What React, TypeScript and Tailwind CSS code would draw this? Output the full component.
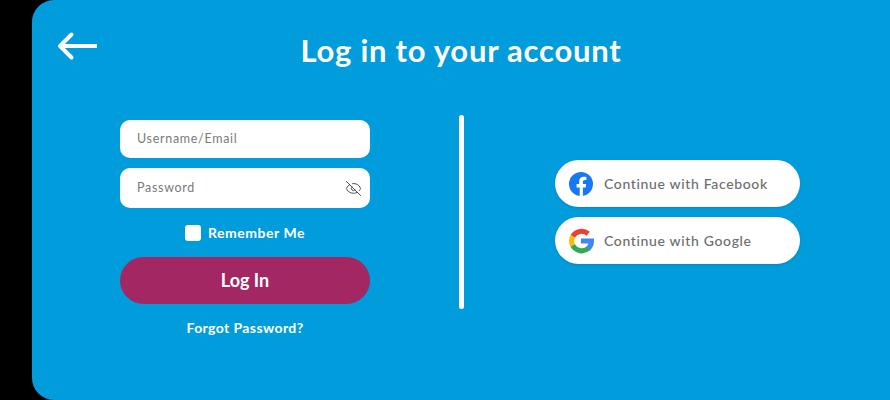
import { EyeOff } from "lucide-react";

const FacebookIcon = () => (
  <svg width="24" height="24" viewBox="0 0 24 24" className="shrink-0">
    <circle cx="12" cy="12" r="12" fill="#1877f2" />
    <path
      d="M16.7 15.500l.5-3.500h-3.300V9.800c0-1 .5-1.900 2-1.900h1.500V5c0 0-1.400-.2-2.700-.2-2.700 0-4.500 1.600-4.500 4.600V12H7.600v3.500h3.100V24h3.200v-8.500h2.800z"
      fill="#fff"
    />
  </svg>
);

const GoogleIcon = () => (
  <svg width="26" height="26" viewBox="2.200 2.200 21.600 21.600" fill="none" className="shrink-0">
    <path d="M6.100 9.200A8.700 8.700 0 0 1 19 6.900" stroke="#ea4335" strokeWidth="4.200" />
    <path d="M6.100 9.200a8.700 8.700 0 0 0 0 7.600" stroke="#fbbc05" strokeWidth="4.200" />
    <path d="M6.100 16.800A8.700 8.700 0 0 0 19.400 19" stroke="#34a853" strokeWidth="4.200" />
    <path d="M19 19.300a8.700 8.700 0 0 0 2.700-6.300H13" stroke="#4285f4" strokeWidth="4.200" />
  </svg>
);

const ArrowIcon = () => (
  <svg width="42" height="30" viewBox="0 0 42 30" fill="none" stroke="#fff" strokeWidth="4" strokeLinecap="round" strokeLinejoin="round">
    <path d="M41 15H4" strokeLinecap="butt" />
    <path d="M15.500 3.500 L4 15 L15.500 26.500" />
  </svg>
);

const SocialButton = ({ label, icon }: { label: string; icon: React.ReactNode }) => (
  <button className="w-[245px] h-[47px] rounded-[24px] bg-white flex items-center pl-[13px] shadow-sm">
    <span className="w-[26px] flex justify-center">{icon}</span>
    <span className="ml-[10px] text-[14px] font-medium tracking-[0.65px] text-[#6d6d6d]">{label}</span>
  </button>
);

export default function App() {
  return (
    <div className="w-[890px] h-[400px] bg-black overflow-hidden font-['Lato',sans-serif]">
      <div className="ml-[32px] h-[400px] bg-[#019cdc] rounded-l-[22px] flex flex-col">
        <div className="grid grid-cols-[1fr_auto_1fr] pt-[28px] h-[115px] items-start">
          <div className="pl-[24px] pt-[3px]">
            <ArrowIcon />
          </div>
          <h1 className="text-[31px] leading-[44px] font-bold tracking-[0.75px] text-white">
            Log in to your account
          </h1>
        </div>

        <div className="flex">
          <div className="ml-[88px] w-[250px] pt-[5px] flex flex-col items-center">
            <div className="w-full h-[38px] rounded-[10px] bg-white flex items-center px-[17px]">
              <span className="text-[12.500px] tracking-[0.7px] text-[#7a7a7a]">Username/Email</span>
            </div>
            <div className="mt-[10px] w-full h-[40px] rounded-[10px] bg-white flex items-center justify-between pl-[17px] pr-[8px]">
              <span className="text-[12.500px] tracking-[0.7px] text-[#7a7a7a]">Password</span>
              <EyeOff size={17} strokeWidth={1.3} className="text-[#444444]" />
            </div>
            <label className="mt-[14px] flex items-center gap-[7px]">
              <span className="w-[16px] h-[16px] rounded-[3px] bg-white" />
              <span className="text-[14px] font-bold tracking-[0.55px] text-white">Remember Me</span>
            </label>
            <button className="mt-[14px] w-full h-[47px] rounded-[24px] bg-[#a22763] text-[18px] font-bold text-white">
              Log In
            </button>
            <a className="mt-[13px] text-[14px] font-bold tracking-[0.4px] text-white">Forgot Password?</a>
          </div>

          <div className="ml-[89px] w-[5px] h-[194px] rounded-full bg-white" />

          <div className="ml-[91px] pt-[45px] flex flex-col gap-[10px]">
            <SocialButton label="Continue with Facebook" icon={<FacebookIcon />} />
            <SocialButton label="Continue with Google" icon={<GoogleIcon />} />
          </div>
        </div>
      </div>
    </div>
  );
}
